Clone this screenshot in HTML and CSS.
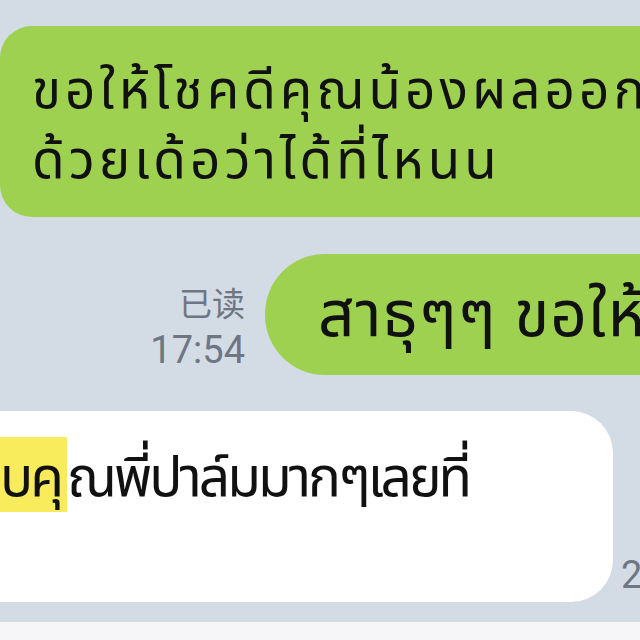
FILE: index.html
```html
<!DOCTYPE html>
<html lang="th">
<head>
  <meta charset="UTF-8">
  <title>แชท</title>
  <link rel="stylesheet" href="styles.css">
</head>
<body>
  <div class="chat">
    <div class="row row-in">
      <div class="bubble bubble-green bubble-first">
        <div>ขอให้โชคดีคุณน้องผลออก</div>
        <div>ด้วยเด้อว่าได้ที่ไหนน</div>
      </div>
    </div>

    <div class="row row-out">
      <div class="meta">
        <div class="read">已读</div>
        <div class="time">17:54</div>
      </div>
      <div class="bubble bubble-green bubble-pill">สาธุๆๆ ขอให้ผลออกมาดี</div>
    </div>

    <div class="row row-reply">
      <div class="bubble bubble-white">
        <div><mark>บคุ</mark>ณพี่ปาล์มมากๆเลยที่</div>
      </div>
      <div class="meta meta-side">
        <div class="time">2</div>
      </div>
    </div>
  </div>
  <div class="footer"></div>
</body>
</html>
```

FILE: styles.css
```css
body {
  margin: 0;
  width: 640px;
  height: 640px;
  overflow: hidden;
  background-color: #d3dbe5;
  font-family: "Noto Sans", "Noto Sans Thai", "Loma", sans-serif;
}

.chat {
  height: 622px;
  padding-top: 26px;
  box-sizing: border-box;
  overflow: hidden;
}

.row {
  display: flex;
  white-space: nowrap;
}

.bubble {
  color: #111;
  box-sizing: border-box;
}

.bubble-green {
  background-color: #9fd151;
}

.bubble-first {
  width: 700px;
  flex-shrink: 0;
  height: 191px;
  border-radius: 32px 0 0 32px;
  padding: 27px 0 0 32px;
  font-size: 53px;
  line-height: 70px;
  letter-spacing: 4px;
}

.row-out {
  margin-top: 37px;
  align-items: flex-end;
}

.meta {
  color: #6e7684;
  font-family: "Roboto", "Noto Sans CJK SC", sans-serif;
  text-align: right;
}

.read {
  font-size: 33px;
  line-height: 44px;
}

.time {
  font-size: 38px;
  line-height: 46px;
}

.row-out .meta {
  width: 245px;
  flex-shrink: 0;
  padding-bottom: 2px;
}

.bubble-pill {
  margin-left: 20px;
  flex-shrink: 0;
  width: 500px;
  height: 121px;
  border-radius: 60px 0 0 60px;
  padding: 20px 0 0 53px;
  font-size: 64px;
  line-height: 76px;
  letter-spacing: 1px;
}

.row-reply {
  margin-top: 36px;
  align-items: flex-end;
}

.bubble-white {
  background-color: #fff;
  width: 613px;
  flex-shrink: 0;
  height: 191px;
  border-radius: 0 42px 42px 0;
  padding: 28px 0 0 0;
  font-size: 55px;
  line-height: 72px;
  letter-spacing: -3px;
}

mark {
  background-color: #f8ec5c;
  color: inherit;
  padding-right: 6px;
}

.meta-side {
  margin-left: 8px;
  padding-bottom: 4px;
}

.footer {
  height: 18px;
  background-color: #f6f6f8;
}
```
